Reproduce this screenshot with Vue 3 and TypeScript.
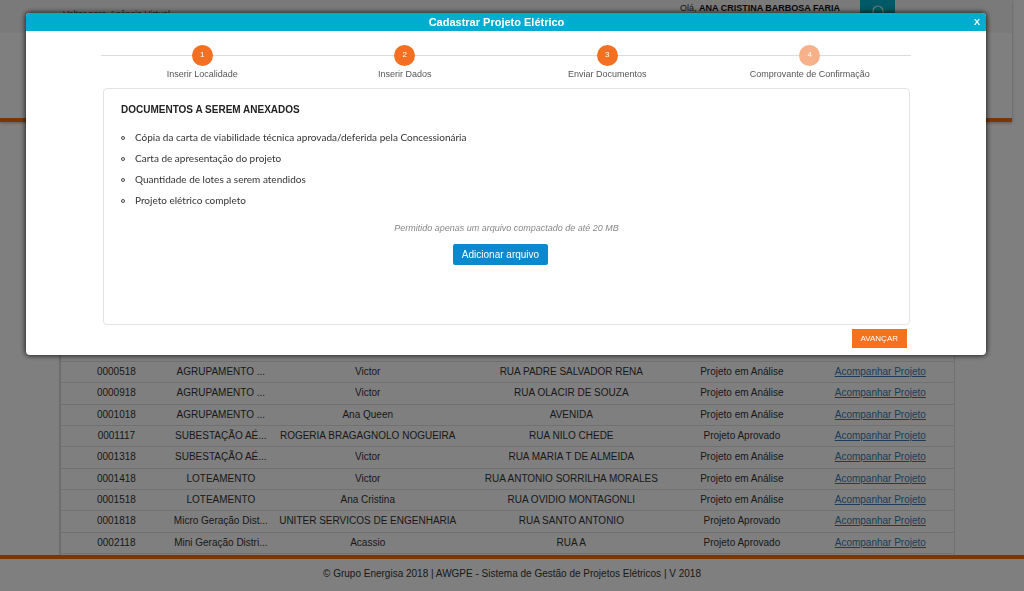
<script setup lang="ts">
interface Project {
  code: string
  kind: string
  owner: string
  street: string
  status: string
}

interface Step {
  label: string
  pending?: boolean
}

const projects: Project[] = [
  { code: '0000518', kind: 'AGRUPAMENTO ...', owner: 'Victor', street: 'RUA PADRE SALVADOR RENA', status: 'Projeto em Análise' },
  { code: '0000918', kind: 'AGRUPAMENTO ...', owner: 'Victor', street: 'RUA OLACIR DE SOUZA', status: 'Projeto em Análise' },
  { code: '0001018', kind: 'AGRUPAMENTO ...', owner: 'Ana Queen', street: 'AVENIDA', status: 'Projeto em Análise' },
  { code: '0001117', kind: 'SUBESTAÇÃO AÉ...', owner: 'ROGERIA BRAGAGNOLO NOGUEIRA', street: 'RUA NILO CHEDE', status: 'Projeto Aprovado' },
  { code: '0001318', kind: 'SUBESTAÇÃO AÉ...', owner: 'Victor', street: 'RUA MARIA T DE ALMEIDA', status: 'Projeto em Análise' },
  { code: '0001418', kind: 'LOTEAMENTO', owner: 'Victor', street: 'RUA ANTONIO SORRILHA MORALES', status: 'Projeto em Análise' },
  { code: '0001518', kind: 'LOTEAMENTO', owner: 'Ana Cristina', street: 'RUA OVIDIO MONTAGONLI', status: 'Projeto em Análise' },
  { code: '0001818', kind: 'Micro Geração Dist...', owner: 'UNITER SERVICOS DE ENGENHARIA', street: 'RUA SANTO ANTONIO', status: 'Projeto Aprovado' },
  { code: '0002118', kind: 'Mini Geração Distri...', owner: 'Acassio', street: 'RUA A', status: 'Projeto Aprovado' },
]

const steps: Step[] = [
  { label: 'Inserir Localidade' },
  { label: 'Inserir Dados' },
  { label: 'Enviar Documentos' },
  { label: 'Comprovante de Confirmação', pending: true },
]

const documents: string[] = [
  'Cópia da carta de viabilidade técnica aprovada/deferida pela Concessionária',
  'Carta de apresentação do projeto',
  'Quantidade de lotes a serem atendidos',
  'Projeto elétrico completo',
]
</script>

<template>
  <div class="page">
    <header class="site-header">
      <div class="top-bar">
        <nav class="top-links">
          <a href="#">Voltar para</a>
          <a href="#">Agência Virtual</a>
        </nav>
        <p class="greeting">Olá, <strong>ANA CRISTINA BARBOSA FARIA</strong></p>
        <button class="search" type="button" aria-label="Pesquisar">
          <svg viewBox="0 0 16 16" width="16" height="16" aria-hidden="true">
            <circle cx="8" cy="7" r="5" fill="none" stroke="#e6f6fa" stroke-width="1.2" />
            <path d="M11 11l4 4" stroke="#e6f6fa" stroke-width="1.2" />
          </svg>
        </button>
      </div>
      <div class="brand-bar"></div>
    </header>

    <main class="content">
      <div class="listing">
        <table class="projects">
          <colgroup>
            <col class="c-code" />
            <col class="c-kind" />
            <col class="c-owner" />
            <col class="c-street" />
            <col class="c-status" />
            <col class="c-action" />
          </colgroup>
          <tbody>
            <tr v-for="p in projects" :key="p.code">
              <td>{{ p.code }}</td>
              <td>{{ p.kind }}</td>
              <td>{{ p.owner }}</td>
              <td>{{ p.street }}</td>
              <td>{{ p.status }}</td>
              <td><a href="#">Acompanhar Projeto</a></td>
            </tr>
          </tbody>
        </table>
      </div>
    </main>

    <footer class="site-footer">
      © Grupo Energisa 2018 | AWGPE - Sistema de Gestão de Projetos Elétricos | V 2018
    </footer>

    <div class="overlay">
      <section class="modal" role="dialog" aria-modal="true" aria-labelledby="modal-title">
        <div class="modal-head">
          <h1 id="modal-title">Cadastrar Projeto Elétrico</h1>
          <button class="close" type="button">X</button>
        </div>

        <ol class="steps">
          <li v-for="(s, i) in steps" :key="s.label" :class="{ pending: s.pending }">
            <span class="dot">{{ i + 1 }}</span>
            <span class="label">{{ s.label }}</span>
          </li>
        </ol>

        <div class="panel">
          <h2>DOCUMENTOS A SEREM ANEXADOS</h2>
          <ul class="docs">
            <li v-for="d in documents" :key="d">{{ d }}</li>
          </ul>
          <p class="hint">Permitido apenas um arquivo compactado de até 20 MB</p>
          <div class="upload">
            <button class="add" type="button">Adicionar arquivo</button>
          </div>
        </div>

        <div class="actions">
          <button class="next" type="button">AVANÇAR</button>
        </div>
      </section>
    </div>
  </div>
</template>

<style>
body {
  margin: 0;
  background: #fff;
}
</style>

<style scoped>
.page {
  display: flex;
  flex-direction: column;
  height: 100vh;
  overflow: hidden;
  font-family: "Liberation Sans", Arial, sans-serif;
  font-size: 10px;
  color: #333;
}

button {
  border: 0;
  padding: 0;
  font-family: inherit;
  cursor: pointer;
}

/* Site header */
.site-header {
  margin-right: 12px;
  border-bottom: 4px solid #f26f0c;
  box-shadow: 0 1px 3px rgba(0, 0, 0, 0.3);
}

.top-bar {
  display: flex;
  align-items: flex-start;
  height: 33px;
  padding: 0 117px 0 63px;
  background: #f5f5f5;
  font-size: 9px;
  line-height: 12px;
}

.top-links {
  display: flex;
  gap: 3px;
  margin-right: auto;
  padding-top: 8px;
}

.top-links a {
  color: #444;
  text-decoration: none;
}

.greeting {
  margin: 0 20px 0 0;
  padding-top: 2px;
}

.greeting strong {
  color: #111;
}

.search {
  display: flex;
  align-items: center;
  justify-content: center;
  width: 35px;
  height: 24px;
  background: #00b2cc;
}

.brand-bar {
  height: 85px;
}

/* Project listing */
.content {
  flex: 1;
  min-height: 0;
  display: flex;
  padding: 0 69px 0 59px;
}

.listing {
  flex: 1;
  display: flex;
  align-items: flex-end;
  padding-bottom: 1px;
  border-left: 2px solid #dcdcdc;
  border-right: 1px solid #e2e2e2;
}

.projects {
  width: 100%;
  height: 193px;
  table-layout: fixed;
  border-collapse: collapse;
  border-bottom: 1px solid #e2e2e2;
}

.c-code { width: 12.4%; }
.c-kind { width: 11%; }
.c-owner { width: 21.9%; }
.c-street { width: 23.7%; }
.c-status { width: 14.5%; }
.c-action { width: 16.5%; }

.projects td {
  padding: 0;
  border-top: 1px solid #e2e2e2;
  text-align: center;
  white-space: nowrap;
  line-height: 12px;
}

.projects a {
  color: #337ab7;
}

/* Footer */
.site-footer {
  border-top: 4px solid #f26f0c;
  padding: 9px 0 11px;
  line-height: 12px;
  text-align: center;
}

/* Dialog */
.overlay {
  position: fixed;
  inset: 0;
  padding: 13px 38px 0 26px;
  background: rgba(0, 0, 0, 0.5);
}

.modal {
  overflow: hidden;
  background: #fff;
  border-radius: 4px;
  box-shadow: 0 0 5px 1px rgba(0, 0, 0, 0.7);
}

.modal-head {
  display: flex;
  align-items: center;
  height: 18px;
  padding-right: 6px;
  background: #00add0;
  color: #fff;
}

.modal-head h1 {
  flex: 1;
  margin: 0;
  padding-right: 7px;
  font-size: 11px;
  line-height: 18px;
  text-align: center;
}

.close {
  background: none;
  color: #fff;
  font-size: 9px;
  font-weight: bold;
}

.steps {
  display: grid;
  grid-template-columns: repeat(4, 1fr);
  margin: 0 75px;
  padding: 14px 0 8px;
  list-style: none;
}

.steps li {
  display: flex;
  flex-direction: column;
  align-items: center;
  background: linear-gradient(#dcdcdc, #dcdcdc) 0 10px / 100% 1px no-repeat;
}

.dot {
  display: flex;
  justify-content: center;
  width: 21px;
  height: 21px;
  border-radius: 50%;
  background: #f36f21;
  color: #fff;
  font-size: 8px;
  line-height: 19px;
}

.pending .dot {
  background: #f7b18a;
}

.label {
  margin-top: 2px;
  font-size: 9px;
  line-height: 12px;
  color: #555;
}

.panel {
  margin: 0 76px 0 77px;
  padding: 14px 17px 59px;
  border: 1px solid #e3e3e3;
  border-radius: 4px;
}

.panel h2 {
  margin: 0 0 10px;
  font-size: 10px;
  line-height: 14px;
  color: #222;
}

.docs {
  margin: 0;
  padding: 0;
  list-style: none;
  font-family: Lato, "Open Sans", sans-serif;
  font-size: 10px;
  line-height: 21px;
}

.docs li {
  display: flex;
  align-items: center;
  gap: 10px;
}

.docs li::before {
  content: "";
  width: 2px;
  height: 2px;
  border: 1px solid #444;
  border-radius: 50%;
}

.hint {
  margin: 10px 0 9px;
  font-size: 9px;
  font-style: italic;
  line-height: 14px;
  text-align: center;
  color: #888;
}

.upload {
  padding-right: 12px;
  text-align: center;
}

.add {
  padding: 0 9px;
  border-radius: 2px;
  background: #0a88d0;
  color: #fff;
  font-size: 10px;
  line-height: 21px;
}

.actions {
  display: flex;
  justify-content: flex-end;
  padding: 4px 79px 7px 0;
}

.next {
  padding: 0 9px;
  background: #f57120;
  color: #fff;
  font-size: 8px;
  line-height: 19px;
}
</style>
